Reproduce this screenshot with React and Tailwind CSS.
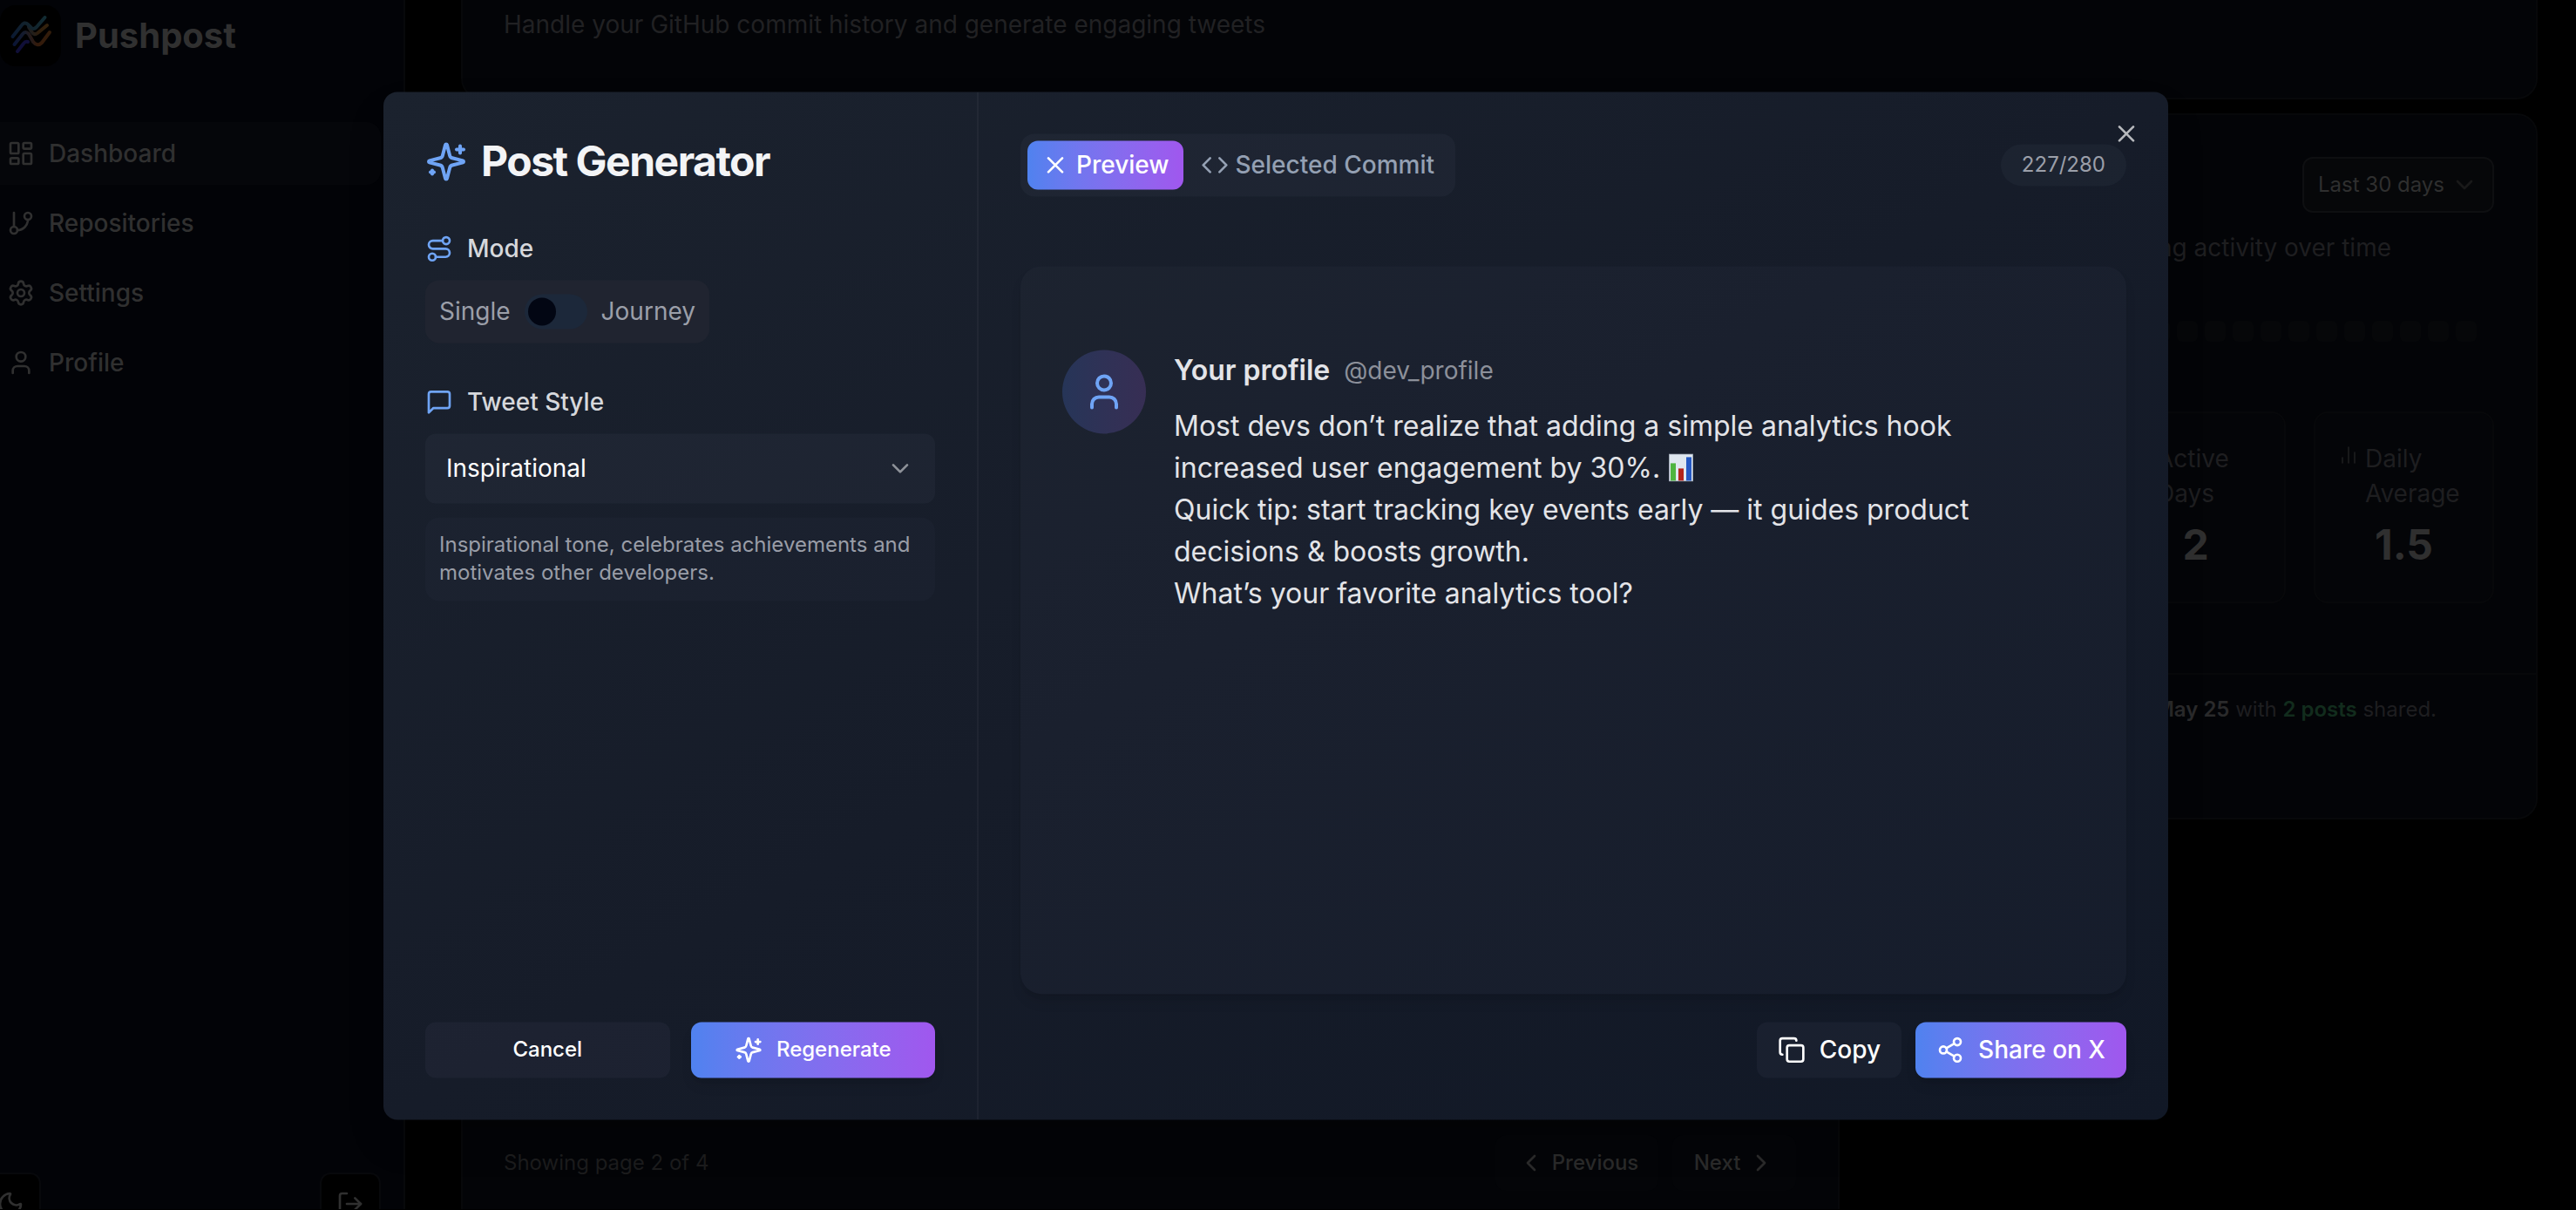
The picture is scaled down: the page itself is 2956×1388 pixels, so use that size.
import { X, Code, Route, User, Copy, Share2, ChevronDown, ChevronLeft, ChevronRight, GitBranch, Settings, LayoutDashboard, LogOut, Moon, ChartNoAxesColumn } from "lucide-react";

function Sparkles({ className }) {
  return (
    <svg viewBox="0 0 24 24" fill="none" stroke="currentColor" strokeWidth="2" strokeLinecap="round" strokeLinejoin="round" className={className}>
      <path d="M9.937 15.5A2 2 0 0 0 8.5 14.063l-6.135-1.582a.5.5 0 0 1 0-.962L8.5 9.936A2 2 0 0 0 9.937 8.5l1.582-6.135a.5.5 0 0 1 .963 0L14.063 8.5A2 2 0 0 0 15.5 9.937l6.135 1.581a.5.5 0 0 1 0 .964L15.5 14.063a2 2 0 0 0-1.437 1.437l-1.582 6.135a.5.5 0 0 1-.963 0z" />
      <path d="M20 3v4" />
      <path d="M22 5h-4" />
      <path d="M4 17v2" />
      <path d="M5 18H3" />
    </svg>
  );
}

function MessageIcon({ className }) {
  return (
    <svg viewBox="0 0 24 24" fill="none" stroke="currentColor" strokeWidth="2" strokeLinecap="round" strokeLinejoin="round" className={className}>
      <path d="M21 15a2 2 0 0 1-2 2H7l-4 4V5a2 2 0 0 1 2-2h14a2 2 0 0 1 2 2z" />
    </svg>
  );
}

function Logo() {
  return (
    <div className="flex h-[70px] w-[70px] shrink-0 items-center justify-center rounded-[18px] bg-black">
      <svg viewBox="0 6 70 70" className="h-[70px] w-[70px]" fill="none" strokeWidth="4" strokeLinecap="round" strokeLinejoin="round">
        <defs>
          <linearGradient id="lg1" x1="14" y1="42" x2="52" y2="20" gradientUnits="userSpaceOnUse">
            <stop stopColor="#0b1a33" />
            <stop offset="0.5" stopColor="#12222c" />
            <stop offset="1" stopColor="#122c33" />
          </linearGradient>
          <linearGradient id="lg2" x1="32" y1="36" x2="54" y2="30" gradientUnits="userSpaceOnUse">
            <stop stopColor="#1a1f24" />
            <stop offset="0.5" stopColor="#2e1d0c" />
            <stop offset="1" stopColor="#33220d" />
          </linearGradient>
          <linearGradient id="lg3" x1="16" y1="50" x2="57" y2="40" gradientUnits="userSpaceOnUse">
            <stop stopColor="#0b1536" />
            <stop offset="0.35" stopColor="#151c2c" />
            <stop offset="0.6" stopColor="#331a0b" />
            <stop offset="1" stopColor="#331d0b" />
          </linearGradient>
        </defs>
        <path d="M33 31 L36 36 Q39 41 43 38 L54 29" stroke="url(#lg2)" />
        <path d="M14.500 42 L24 30 Q28 24 32 28 L35 31 Q38 35 42 31 L51.500 20" stroke="url(#lg1)" />
        <path d="M16.500 51 L26 39 Q29 35 33 39 L38 48 Q43 54 48 49 L57 37" stroke="url(#lg3)" />
        <path d="M20 59 L27 50 Q29 47 32 48" stroke="#100f38" />
      </svg>
    </div>
  );
}

function BarChartEmoji() {
  return (
    <svg role="img" aria-label="bar chart" viewBox="0 0 28 32" className="ml-[10px] inline-block h-8 w-7 align-[-4px]">
      <rect width="28" height="32" fill="#9fa9b5" />
      <rect x="1" y="1" width="26" height="30" fill="#dfe7f0" />
      <rect x="2" y="11" width="6" height="20" fill="#4fb540" />
      <rect x="11" y="17" width="6" height="14" fill="#b3241b" />
      <rect x="20" y="4" width="6" height="27" fill="#2559c4" />
    </svg>
  );
}

const NAV = [
  { label: "Dashboard", Icon: LayoutDashboard, active: true },
  { label: "Repositories", Icon: GitBranch },
  { label: "Settings", Icon: Settings },
  { label: "Profile", Icon: User },
];

function Sidebar() {
  return (
    <aside className="flex w-[465px] shrink-0 flex-col border-r-2 border-[#07080a] bg-[#020307] pt-[6px] text-[#303030]">
      <div className="flex h-[70px] items-center gap-4">
        <Logo />
        <span className="text-[40px] leading-[56px] font-bold">Pushpost</span>
      </div>
      <nav className="mt-16 flex flex-col gap-2 pr-[26px]">
        {NAV.map(({ label, Icon, active }) => (
          <div key={label} className={active ? "flex h-[72px] items-center gap-4 rounded-r-2xl bg-[#05060a] pl-2 text-[28px] font-medium" : "flex h-[72px] items-center gap-4 pl-2 text-[28px] font-medium"}>
            <Icon className="size-8" />
            {label}
          </div>
        ))}
      </nav>
      <div className="mt-auto -mb-[30px] flex shrink-0 justify-between pr-[26px]">
        <div className="-ml-[23px] flex h-[72px] w-[70px] items-center justify-center rounded-xl border-2 border-[#07080b] bg-black">
          <Moon className="size-8" />
        </div>
        <div className="flex h-[72px] w-[70px] items-center justify-center rounded-xl border-2 border-[#07080b] bg-black">
          <LogOut className="size-8" />
        </div>
      </div>
    </aside>
  );
}

function Stat({ label, value, icon }) {
  return (
    <div className="flex h-[220px] flex-col items-center rounded-2xl border-2 border-[#07080a] bg-[#040508] pt-8">
      <div className="flex w-full pl-[26px] text-[28px] leading-10 text-[#1e1e20]">
        <span className="mt-1 mr-[7px] flex size-6 shrink-0">{icon}</span>
        <span className="w-[110px]">{label}</span>
      </div>
      <div className="mt-[7px] text-[48px] leading-[64px] font-bold text-[#2f2f2f]">{value}</div>
    </div>
  );
}

function ActivityCard() {
  return (
    <section className="h-[810px] w-[785px] shrink-0 rounded-3xl border-2 border-[#07080a] bg-[#030407] pt-12">
      <div className="px-12">
        <div className="flex justify-end">
          <div className="flex h-16 w-[220px] items-center justify-between rounded-xl border-2 border-[#0e0f11] bg-[#060709] pr-4 pl-4 text-[24px] text-[#2f2f2f]">
            Last 30 days
            <ChevronDown className="size-8 text-[#191919]" />
          </div>
        </div>
        <p className="mt-5 w-[567px] text-right text-[28px] leading-10 whitespace-nowrap text-[#1e1e20]">Your posting activity over time</p>
        <div className="mt-16 flex justify-end gap-2 pr-5">
          {Array.from({ length: 20 }, (_, i) => (
            <span key={i} className="size-6 rounded-md bg-[#060709]" />
          ))}
        </div>
        <div className="mt-20 grid grid-cols-3 gap-8">
          <Stat label="Total Posts" value="3" />
          <Stat label="Active Days" value="2" />
          <Stat label="Daily Average" value="1.5" icon={<ChartNoAxesColumn strokeWidth={1.6} className="size-6" />} />
        </div>
      </div>
      <div className="mt-20 border-t-2 border-[#07080a] pt-6">
        <p className="w-[667px] text-right text-[24px] leading-8 whitespace-nowrap text-[#1e1e20]">
          Your most active day was <b className="font-semibold text-[#2a2a2b]">May 25</b> with <b className="font-semibold text-[#122c1d]">2 posts</b> shared.
        </p>
      </div>
    </section>
  );
}

function Main() {
  return (
    <main className="flex flex-1 flex-col gap-4 pr-11 pl-16">
      <section className="h-[114px] shrink-0 rounded-b-3xl border-2 border-t-0 border-[#07080a] bg-[#030407] pt-2 pl-[47px] text-[28px] leading-10 text-[#212123]">
        Handle your GitHub commit history and generate engaging tweets
      </section>
      <div className="flex flex-1 gap-4">
        <section className="flex flex-1 flex-col justify-end rounded-t-3xl border-2 border-b-0 border-[#07080a] bg-[#030407] pr-12 pb-[21px] pl-[47px]">
          <div className="flex h-16 items-center text-[24px]">
            <span className="flex-1 text-[#1c1c1d]">Showing page 2 of 4</span>
            <div className="flex gap-4 font-medium text-[#2a2a2a]">
              <div className="flex h-16 w-[187px] items-center justify-center gap-2 rounded-xl bg-[#040508] pl-0.5">
                <ChevronLeft className="size-8" />
                Previous
              </div>
              <div className="flex h-16 w-[142px] items-center justify-center gap-2 rounded-xl bg-[#040508] pl-px">
                Next
                <ChevronRight className="size-8" />
              </div>
            </div>
          </div>
        </section>
        <ActivityCard />
      </div>
    </main>
  );
}

function SettingsPane() {
  return (
    <div className="flex w-[683px] shrink-0 flex-col border-r-2 border-white/[0.04] p-12 pr-12">
      <h2 className="flex h-16 items-center gap-4 text-[48px] font-bold tracking-[-0.031em] text-[#f3f4f6]">
        <Sparkles className="size-12 text-[#6fa4f5]" />
        Post Generator
      </h2>
      <div className="mt-12 flex h-10 items-center gap-4 text-[28px] font-medium text-[#d6d8dc]">
        <Route className="size-8 text-[#6fa4f5]" />
        Mode
      </div>
      <div className="mt-4 flex h-[72px] items-center gap-4 self-start rounded-2xl bg-[#202430] px-4 text-[28px] text-[#9b9fa9]">
        Single
        <span className="flex h-10 w-[72px] items-center rounded-full bg-[#1c283a] p-1">
          <span className="size-8 rounded-full bg-[#020613]" />
        </span>
        Journey
      </div>
      <div className="mt-12 flex h-10 items-center gap-4 text-[28px] font-medium text-[#d6d8dc]">
        <MessageIcon className="size-8 text-[#6fa4f5]" />
        Tweet Style
      </div>
      <div className="mt-4 flex h-20 items-center justify-between rounded-xl bg-[#d0d8ff]/[0.035] px-6 text-[28px] text-white">
        Inspirational
        <ChevronDown className="size-8 text-[#8e9299]" />
      </div>
      <p className="mt-4 h-24 rounded-2xl bg-[#d0d8ff]/[0.02] p-4 text-[24px] leading-8 text-[#999da7]">
        Inspirational tone, celebrates achievements and motivates other developers.
      </p>
      <div className="mt-auto grid grid-cols-2 gap-6 text-[24px] font-medium text-white">
        <button className="h-16 rounded-xl bg-[#d0d8ff]/[0.04]">Cancel</button>
        <button className="flex h-16 items-center justify-center gap-4 rounded-xl bg-linear-to-r from-[#4f82ef] to-[#a057ee] shadow-lg">
          <Sparkles className="size-8" />
          Regenerate
        </button>
      </div>
    </div>
  );
}

function PreviewPane() {
  return (
    <div className="flex flex-1 flex-col p-12">
      <div className="flex items-center justify-between">
        <div className="flex h-[72px] items-center gap-1 rounded-2xl bg-[#d0d8ff]/[0.035] p-2 text-[28px] font-medium">
          <div className="flex h-14 items-center gap-2 rounded-xl bg-linear-to-r from-[#4f82ef] to-[#a057ee] px-4 text-white">
            <X className="size-8" />
            Preview
          </div>
          <div className="flex h-14 items-center gap-2 px-4 text-[#94a0b3]">
            <Code className="size-8" />
            Selected Commit
          </div>
        </div>
        <span className="flex h-12 items-center rounded-full bg-[#d0d8ff]/[0.035] px-6 text-[24px] text-[#9b9fa9]">227/280</span>
      </div>
      <article className="mt-20 flex h-[835px] gap-8 rounded-3xl bg-[#d0d8ff]/[0.022] px-12 pt-24 shadow-lg">
        <div className="flex size-24 shrink-0 items-center justify-center rounded-full bg-linear-to-r from-[#263558] to-[#372e54]">
          <User className="size-12 text-[#6fa4f5]" />
        </div>
        <div className="text-[32px] leading-[48px] text-[#e3e4e8]">
          <div className="mb-4 flex items-center gap-4">
            <span className="font-semibold">Your profile</span>
            <span className="text-[28px] text-[#8c909a]">@dev_profile</span>
          </div>
          <p className="whitespace-nowrap">
            Most devs don’t realize that adding a simple analytics hook
            <br />
            increased user engagement by 30%.
            <BarChartEmoji />
            <br />
            Quick tip: start tracking key events early — it guides product
            <br />
            decisions &amp; boosts growth.
            <br />
            What’s your favorite analytics tool?
          </p>
        </div>
      </article>
      <div className="mt-8 flex justify-end gap-4 text-[28px] font-medium text-white">
        <button className="flex h-16 items-center gap-4 rounded-xl bg-[#d0d8ff]/[0.04] px-6">
          <Copy className="size-8" />
          Copy
        </button>
        <button className="flex h-16 items-center gap-4 rounded-xl bg-linear-to-r from-[#4f82ef] to-[#a057ee] px-6 shadow-lg">
          <Share2 className="size-8" />
          Share on X
        </button>
      </div>
    </div>
  );
}

export default function App() {
  return (
    <div className="relative h-[1388px] w-[2956px] overflow-hidden bg-black font-['Inter',sans-serif]">
      <div className="flex h-[1387px] overflow-hidden">
        <Sidebar />
        <Main />
      </div>
      <div role="dialog" className="absolute top-[105px] left-[440px] flex h-[1179px] w-[2048px] translate-y-[0.4px] overflow-hidden rounded-2xl bg-linear-to-br from-[#1b222e] via-[#161c29] to-[#111826] shadow-2xl">
        <SettingsPane />
        <PreviewPane />
        <X className="absolute top-8 right-8 size-8 text-[#b8babe]" />
      </div>
    </div>
  );
}
